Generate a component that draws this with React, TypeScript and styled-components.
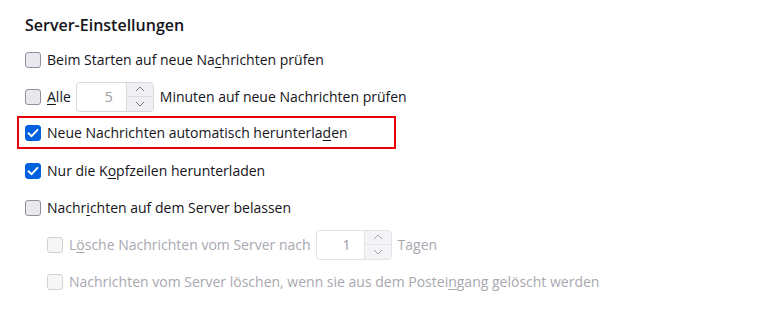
import React from "react";
import styled, { createGlobalStyle } from "styled-components";

const GlobalStyle = createGlobalStyle`
  html, body {
    margin: 0;
    padding: 0;
    background: #ffffff;
  }
  body {
    font-family: "Open Sans", "Noto Sans", "Liberation Sans", sans-serif;
    color: #15141a;
  }
`;

const Page = styled.div`
  width: 773px;
  height: 311px;
  box-sizing: border-box;
  padding: 13px 0 0 25px;
  overflow: hidden;
`;

const Title = styled.h2`
  margin: 0 0 4px 0;
  height: 24px;
  line-height: 24px;
  font-size: 16px;
  font-weight: 600;
  color: #15141a;
`;

const Row = styled.div<{ $indent?: boolean; $highlighted?: boolean }>`
  display: flex;
  align-items: center;
  height: 37px;
  box-sizing: border-box;
  margin-left: ${(p) => (p.$indent ? "22px" : "0")};
  ${(p) =>
    p.$highlighted &&
    `
    height: 33px;
    margin: 1px 0 3px -8px;
    padding-left: 6px;
    width: 379px;
    border: 2px solid #e8000b;
  `}
`;

const Box = styled.span<{ $checked?: boolean; $disabled?: boolean }>`
  flex: none;
  width: 16px;
  height: 16px;
  box-sizing: border-box;
  border-radius: 3px;
  border: 1px solid ${(p) => (p.$checked ? "#0061e0" : "#8f8f9d")};
  background: ${(p) => (p.$checked ? "#0061e0" : "#e9e9ed")};
  opacity: ${(p) => (p.$disabled ? 0.4 : 1)};
  display: flex;
  align-items: center;
  justify-content: center;
  margin-right: 6px;
`;

const Label = styled.span<{ $disabled?: boolean }>`
  font-size: 14px;
  white-space: nowrap;
  color: ${(p) => (p.$disabled ? "#a8a8b0" : "#15141a")};
`;

const Key = styled.span`
  text-decoration: underline;
  text-underline-offset: 2px;
`;

const NumberField = styled.div<{ $disabled?: boolean; $width: number }>`
  display: flex;
  width: ${(p) => p.$width}px;
  height: 30px;
  box-sizing: border-box;
  margin: 0 6px 0 5px;
  border: 1px solid ${(p) => (p.$disabled ? "#e3e3e6" : "#d7d7db")};
  border-radius: 4px;
  background: #fff;
  overflow: hidden;
`;

const NumberValue = styled.span`
  flex: 1;
  text-align: right;
  padding-right: 13px;
  line-height: 28px;
  font-size: 14px;
  color: #9a9aa2;
`;

const Spinner = styled.div<{ $disabled?: boolean }>`
  width: 26px;
  display: flex;
  flex-direction: column;
  border-left: 1px solid #dcdce0;
  background: #f0f0f4;
  opacity: ${(p) => (p.$disabled ? 0.7 : 1)};
`;

const SpinButton = styled.div<{ $top?: boolean }>`
  flex: 1;
  display: flex;
  align-items: center;
  justify-content: center;
  border-bottom: ${(p) => (p.$top ? "1px solid #dcdce0" : "none")};
`;

const Check = () => (
  <svg width="12" height="12" viewBox="0 0 12 12">
    <polyline
      points="1.5,6.2 4.6,9.2 10.5,2.8"
      fill="none"
      stroke="#fff"
      strokeWidth="1.9"
      strokeLinecap="round"
      strokeLinejoin="round"
    />
  </svg>
);

const Chevron = ({ up }: { up?: boolean }) => (
  <svg width="10" height="6" viewBox="0 0 10 6">
    <polyline
      points={up ? "1,5 5,1 9,5" : "1,1 5,5 9,1"}
      fill="none"
      stroke="#7a7a82"
      strokeWidth="1"
    />
  </svg>
);

const CheckBox = ({ checked, disabled }: { checked?: boolean; disabled?: boolean }) => (
  <Box $checked={checked} $disabled={disabled}>
    {checked && <Check />}
  </Box>
);

const NumberInput = ({ value, width, disabled }: { value: number; width: number; disabled?: boolean }) => (
  <NumberField $width={width} $disabled={disabled}>
    <NumberValue>{value}</NumberValue>
    <Spinner $disabled={disabled}>
      <SpinButton $top>
        <Chevron up />
      </SpinButton>
      <SpinButton>
        <Chevron />
      </SpinButton>
    </Spinner>
  </NumberField>
);

const App = () => {
  return (
    <>
      <GlobalStyle />
      <Page>
        <Title>Server-Einstellungen</Title>
        <Row>
          <CheckBox />
          <Label>
            Beim Starten auf neue Na<Key>c</Key>hrichten prüfen
          </Label>
        </Row>
        <Row>
          <CheckBox />
          <Label>
            <Key>A</Key>lle
          </Label>
          <NumberInput value={5} width={78} />
          <Label>Minuten auf neue Nachrichten prüfen</Label>
        </Row>
        <Row $highlighted>
          <CheckBox checked />
          <Label>
            Neue Nachrichten automatisch herunterla<Key>d</Key>en
          </Label>
        </Row>
        <Row>
          <CheckBox checked />
          <Label>
            Nur die K<Key>o</Key>pfzeilen herunterladen
          </Label>
        </Row>
        <Row>
          <CheckBox />
          <Label>
            Nachr<Key>i</Key>chten auf dem Server belassen
          </Label>
        </Row>
        <Row $indent>
          <CheckBox disabled />
          <Label $disabled>
            L<Key>ö</Key>sche Nachrichten vom Server nach
          </Label>
          <NumberInput value={1} width={76} disabled />
          <Label $disabled>Tagen</Label>
        </Row>
        <Row $indent>
          <CheckBox disabled />
          <Label $disabled>
            Nachrichten vom Server löschen, wenn sie aus dem Postei<Key>n</Key>gang gelöscht werden
          </Label>
        </Row>
      </Page>
    </>
  );
};

export default App;
